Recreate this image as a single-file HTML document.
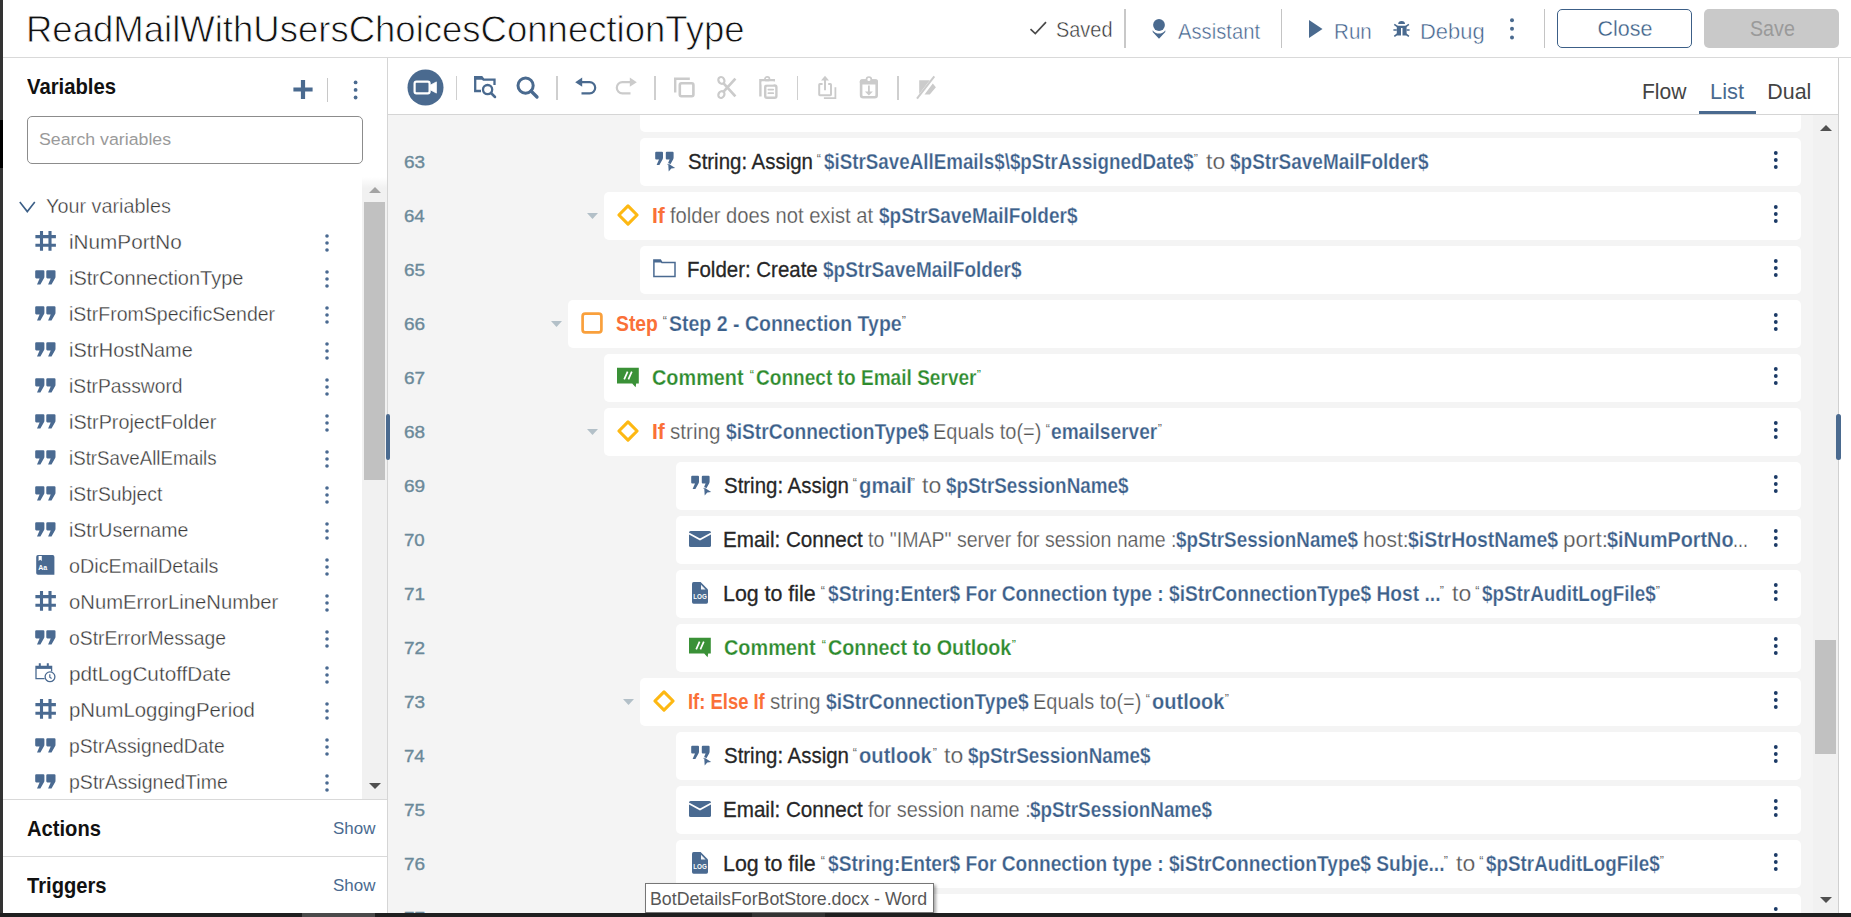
<!DOCTYPE html>
<html lang="en"><head><meta charset="utf-8"><title>ReadMailWithUsersChoicesConnectionType</title>
<style>
*{box-sizing:border-box;margin:0;padding:0}
html,body{width:1851px;height:917px;overflow:hidden;background:#fff}
body{position:relative;font-family:"Liberation Sans",sans-serif;color:#222}
.abs{position:absolute}
.t{position:absolute;white-space:nowrap;line-height:1;transform-origin:0 0}
svg{position:absolute;overflow:visible}
/* frame edges */
#edgeL{left:0;top:0;width:3px;height:917px;background:#333}
#edgeL2{left:0;top:120px;width:3px;height:48px;background:#000}
#edgeB{left:0;top:913px;width:1851px;height:4px;background:#1f1f1f}
#edgeB2{left:302px;top:913px;width:73px;height:4px;background:#4a4a4a}
/* header */
#hdr{left:3px;top:0;width:1848px;height:58px;background:#fff;border-bottom:1px solid #d9d9d9}
.title{font-size:36.3px;color:#111;-webkit-text-stroke:0.8px #fff}
.h20{font-size:21.4px;color:#333;-webkit-text-stroke:0.45px #fff}
.h21{font-size:21.4px;color:#3f618b;-webkit-text-stroke:0.45px #fff}
.vdiv{position:absolute;background:#c4c4c4;width:1px}
#btnClose{left:1557px;top:9px;width:135px;height:39px;border:1px solid #3c5f87;border-radius:5px;background:#fff}
#btnSave{left:1704px;top:9px;width:135px;height:39px;border-radius:5px;background:#c9c9c9}
.btnc{font-size:21.5px;color:#3c5f87;-webkit-text-stroke:0.3px #fff}
.btns{font-size:21.5px;color:#9a9a9a}
/* sidebar */
#side{left:3px;top:58px;width:385px;height:855px;background:#fff;border-right:1px solid #d5d5d5}
.sh{font-size:21.5px;font-weight:bold;color:#111}
#search{left:27px;top:116px;width:336px;height:48px;border:1px solid #8c8c8c;border-radius:5px;background:#fff}
.ph{font-size:17.4px;color:#9a9a9a}
.yv{font-size:19.8px;color:#333;-webkit-text-stroke:0.4px #fff}
.vn{font-size:19.8px;color:#3a3a3a;-webkit-text-stroke:0.32px #fff}
.show{font-size:17.3px;color:#4a6a8f}
.hline{position:absolute;height:1px;background:#d9d9d9}
#sbTrack{left:362px;top:177px;width:25px;height:622px;background:linear-gradient(to bottom,#fff 0,#f1f1f1 11px)}
#sbThumb{left:364px;top:202px;width:21px;height:278px;background:#c1c1c1}
/* toolbar */
#tbar{left:388px;top:58px;width:1451px;height:57px;background:#fff;border-bottom:1px solid #d5d5d5}
.tab{font-size:21.4px;color:#444}
.tabsel{font-size:21.4px;color:#4a6a8f}
#tabline{left:1699px;top:111px;width:57px;height:3px;background:#4a6a8f}
/* list */
#list{left:388px;top:115px;width:1451px;height:798px;background:#f4f4f4;overflow:hidden}
#ltrack{left:1813px;top:115px;width:25px;height:798px;background:#f1f1f1}
#lborder{left:1838px;top:58px;width:1px;height:855px;background:#d0d0d0}
#lthumb{left:1815px;top:640px;width:21px;height:114px;background:#c1c1c1}
.card{position:absolute;height:48px;background:#fff;border-radius:5px}
.ln{font-size:17px;color:#6b8999;-webkit-text-stroke:0.35px #6b8999}
.r{font-size:21.3px}
.k{color:#262626;-webkit-text-stroke:0.28px #262626}
.b{color:#3c608a;font-weight:bold;-webkit-text-stroke:0.25px #fff}
.g{color:#555;-webkit-text-stroke:0.25px #fff}
.o{color:#fa7038;font-weight:bold}
.gr{color:#2e8b2e;font-weight:bold;-webkit-text-stroke:0.25px #fff}
.q{color:#666}
.qg{color:#2e8b2e}
/* tooltip */
#tip{left:645px;top:883px;width:289px;height:30px;background:#fff;border:1px solid #767676;box-shadow:2px 2px 3px rgba(0,0,0,.35)}
.tipt{font-size:18.1px;color:#575757}

</style></head>
<body>
<div id="hdr" class="abs"></div><span id="s0" class="t title" style="left:25.98px;transform:scaleX(1.0061);top:12px;">ReadMailWithUsersChoicesConnectionType</span><svg style="left:1029px;top:20px" width="19" height="16" viewBox="0 0 19 16"><path d="M1.5 9.2 L6.3 13.6 L17 2.2" fill="none" stroke="#4a4a4a" stroke-width="1.7"/></svg><span id="s1" class="t h20" style="left:1056.07px;transform:scaleX(0.9309);top:20px;">Saved</span><div class="vdiv" style="left:1124px;top:9px;height:39px;width:2px;background:#c8c8c8"></div><svg style="left:1152px;top:19px" width="14" height="20" viewBox="0 0 14 20"><circle cx="7" cy="6" r="5.9" fill="#4a6a8f"/><path d="M0.7 11.2 A7.6 7.6 0 0 0 13.3 11.2 L13.3 13 L7 19.7 L0.7 13 Z" fill="#4a6a8f"/></svg><span id="s2" class="t h21" style="left:1177.50px;transform:scaleX(0.9462);top:22px;">Assistant</span><div class="vdiv" style="left:1281px;top:9px;height:39px"></div><svg style="left:1309px;top:20px" width="14" height="18" viewBox="0 0 14 18"><path d="M0 0 L13.5 9 L0 18 Z" fill="#4a6a8f"/></svg><span id="s3" class="t h21" style="left:1333.89px;transform:scaleX(0.9633);top:22px;">Run</span><svg style="left:1393px;top:21px" width="17" height="16" viewBox="0 0 17 16"><g fill="#4a6a8f"><path d="M5.2 3 A3.4 2.9 0 0 1 12 3 Z"/><path d="M3.8 4.7 H13.6 V13.6 Q13.6 14.6 12.6 14.6 H9.5 V7 H8 V14.6 H4.8 Q3.8 14.6 3.8 13.6 Z"/></g><path d="M1.3 3.3 L4.5 5.6 M15.9 3.3 L12.7 5.6 M0.4 9 H3.8 M13.6 9 H16.6 M1.3 15.4 L4.5 13 M15.9 15.4 L12.7 13" fill="none" stroke="#4a6a8f" stroke-width="1.6"/></svg><span id="s4" class="t h21" style="left:1419.79px;transform:scaleX(1.0250);top:22px;">Debug</span><svg style="left:1509px;top:17px" width="6" height="24" viewBox="0 0 6 24"><g fill="#4a6a8f"><circle cx="3" cy="3.2" r="2"/><circle cx="3" cy="11.8" r="2"/><circle cx="3" cy="20.4" r="2"/></g></svg><div class="vdiv" style="left:1544px;top:9px;height:39px"></div><div id="btnClose" class="abs"></div><span id="s5" class="t btnc" style="left:1597.50px;transform:scaleX(1.0000);top:19px;">Close</span><div id="btnSave" class="abs"></div><span id="s6" class="t btns" style="left:1749.59px;transform:scaleX(0.9149);top:19px;">Save</span><div id="side" class="abs"></div><span id="s7" class="t sh" style="left:27.19px;transform:scaleX(0.9429);top:77px;">Variables</span><svg style="left:293px;top:80px" width="20" height="19" viewBox="0 0 20 19"><path d="M10 0 V19 M0.4 9.5 H19.6" stroke="#4a6a8f" stroke-width="4.2" fill="none"/></svg><div class="vdiv" style="left:327px;top:78px;height:24px;background:#c8c8c8"></div><svg style="left:353px;top:80px" width="6" height="20" viewBox="0 0 6 20"><g fill="#4a6a8f"><circle cx="2.6" cy="2.4" r="1.9"/><circle cx="2.6" cy="9.9" r="1.9"/><circle cx="2.6" cy="17.5" r="1.9"/></g></svg><div id="search" class="abs"></div><span id="s8" class="t ph" style="left:39.48px;transform:scaleX(1.0195);top:131px;">Search variables</span><div id="sbTrack" class="abs"></div><div id="sbThumb" class="abs"></div><svg style="left:369px;top:187px" width="12" height="6" viewBox="0 0 12 6"><path d="M0 6 L6 0 L12 6 Z" fill="#a3a3a3"/></svg><svg style="left:369px;top:783px" width="12" height="6" viewBox="0 0 12 6"><path d="M0 0 L6 6 L12 0 Z" fill="#505050"/></svg><svg style="left:19px;top:201px" width="17" height="12" viewBox="0 0 17 12"><path d="M0.8 1 L8.3 10.6 L15.8 1" fill="none" stroke="#3c5f87" stroke-width="1.6"/></svg><span id="s9" class="t yv" style="left:45.93px;transform:scaleX(1.0014);top:197px;">Your variables</span><svg style="left:34.5px;top:231.2px" width="21" height="20" viewBox="0 0 21 20"><path d="M6.5 0.1 V19.7 M15 0.1 V19.7 M0.4 5.6 H20.9 M0.4 14.2 H20.9" stroke="#4a6a91" stroke-width="3.1" fill="none"/></svg><span id="s10" class="t vn" style="left:69.00px;transform:scaleX(1.0467);top:233px;">iNumPortNo</span><svg style="left:324px;top:233.8px" width="6" height="18" viewBox="0 0 6 18"><g fill="#4a6a91"><circle cx="3" cy="2" r="1.8"/><circle cx="3" cy="9" r="1.8"/><circle cx="3" cy="16" r="1.8"/></g></svg><svg style="left:35px;top:270.2px" width="21" height="15" viewBox="0 0 21 15"><g fill="#4a6a91"><path d="M1.3 0.2 H8.3 Q9.4 0.2 9.4 1.3 V6.4 Q9.4 7.6 8.8 8.6 L5.4 14.4 H2 L4.6 8.4 H1.3 Q0.2 8.4 0.2 7.3 V1.3 Q0.2 0.2 1.3 0.2 Z"/><path d="M12.4 0.2 H19.4 Q20.5 0.2 20.5 1.3 V6.4 Q20.5 7.6 19.9 8.6 L16.5 14.4 H13.1 L15.7 8.4 H12.4 Q11.3 8.4 11.3 7.3 V1.3 Q11.3 0.2 12.4 0.2 Z"/></g></svg><span id="s11" class="t vn" style="left:69.05px;transform:scaleX(1.0104);top:269px;">iStrConnectionType</span><svg style="left:324px;top:269.8px" width="6" height="18" viewBox="0 0 6 18"><g fill="#4a6a91"><circle cx="3" cy="2" r="1.8"/><circle cx="3" cy="9" r="1.8"/><circle cx="3" cy="16" r="1.8"/></g></svg><svg style="left:35px;top:306.2px" width="21" height="15" viewBox="0 0 21 15"><g fill="#4a6a91"><path d="M1.3 0.2 H8.3 Q9.4 0.2 9.4 1.3 V6.4 Q9.4 7.6 8.8 8.6 L5.4 14.4 H2 L4.6 8.4 H1.3 Q0.2 8.4 0.2 7.3 V1.3 Q0.2 0.2 1.3 0.2 Z"/><path d="M12.4 0.2 H19.4 Q20.5 0.2 20.5 1.3 V6.4 Q20.5 7.6 19.9 8.6 L16.5 14.4 H13.1 L15.7 8.4 H12.4 Q11.3 8.4 11.3 7.3 V1.3 Q11.3 0.2 12.4 0.2 Z"/></g></svg><span id="s12" class="t vn" style="left:69.08px;transform:scaleX(0.9868);top:305px;">iStrFromSpecificSender</span><svg style="left:324px;top:305.8px" width="6" height="18" viewBox="0 0 6 18"><g fill="#4a6a91"><circle cx="3" cy="2" r="1.8"/><circle cx="3" cy="9" r="1.8"/><circle cx="3" cy="16" r="1.8"/></g></svg><svg style="left:35px;top:342.2px" width="21" height="15" viewBox="0 0 21 15"><g fill="#4a6a91"><path d="M1.3 0.2 H8.3 Q9.4 0.2 9.4 1.3 V6.4 Q9.4 7.6 8.8 8.6 L5.4 14.4 H2 L4.6 8.4 H1.3 Q0.2 8.4 0.2 7.3 V1.3 Q0.2 0.2 1.3 0.2 Z"/><path d="M12.4 0.2 H19.4 Q20.5 0.2 20.5 1.3 V6.4 Q20.5 7.6 19.9 8.6 L16.5 14.4 H13.1 L15.7 8.4 H12.4 Q11.3 8.4 11.3 7.3 V1.3 Q11.3 0.2 12.4 0.2 Z"/></g></svg><span id="s13" class="t vn" style="left:69.06px;transform:scaleX(1.0050);top:341px;">iStrHostName</span><svg style="left:324px;top:341.8px" width="6" height="18" viewBox="0 0 6 18"><g fill="#4a6a91"><circle cx="3" cy="2" r="1.8"/><circle cx="3" cy="9" r="1.8"/><circle cx="3" cy="16" r="1.8"/></g></svg><svg style="left:35px;top:378.2px" width="21" height="15" viewBox="0 0 21 15"><g fill="#4a6a91"><path d="M1.3 0.2 H8.3 Q9.4 0.2 9.4 1.3 V6.4 Q9.4 7.6 8.8 8.6 L5.4 14.4 H2 L4.6 8.4 H1.3 Q0.2 8.4 0.2 7.3 V1.3 Q0.2 0.2 1.3 0.2 Z"/><path d="M12.4 0.2 H19.4 Q20.5 0.2 20.5 1.3 V6.4 Q20.5 7.6 19.9 8.6 L16.5 14.4 H13.1 L15.7 8.4 H12.4 Q11.3 8.4 11.3 7.3 V1.3 Q11.3 0.2 12.4 0.2 Z"/></g></svg><span id="s14" class="t vn" style="left:69.10px;transform:scaleX(0.9746);top:377px;">iStrPassword</span><svg style="left:324px;top:377.8px" width="6" height="18" viewBox="0 0 6 18"><g fill="#4a6a91"><circle cx="3" cy="2" r="1.8"/><circle cx="3" cy="9" r="1.8"/><circle cx="3" cy="16" r="1.8"/></g></svg><svg style="left:35px;top:414.2px" width="21" height="15" viewBox="0 0 21 15"><g fill="#4a6a91"><path d="M1.3 0.2 H8.3 Q9.4 0.2 9.4 1.3 V6.4 Q9.4 7.6 8.8 8.6 L5.4 14.4 H2 L4.6 8.4 H1.3 Q0.2 8.4 0.2 7.3 V1.3 Q0.2 0.2 1.3 0.2 Z"/><path d="M12.4 0.2 H19.4 Q20.5 0.2 20.5 1.3 V6.4 Q20.5 7.6 19.9 8.6 L16.5 14.4 H13.1 L15.7 8.4 H12.4 Q11.3 8.4 11.3 7.3 V1.3 Q11.3 0.2 12.4 0.2 Z"/></g></svg><span id="s15" class="t vn" style="left:69.07px;transform:scaleX(0.9995);top:413px;">iStrProjectFolder</span><svg style="left:324px;top:413.8px" width="6" height="18" viewBox="0 0 6 18"><g fill="#4a6a91"><circle cx="3" cy="2" r="1.8"/><circle cx="3" cy="9" r="1.8"/><circle cx="3" cy="16" r="1.8"/></g></svg><svg style="left:35px;top:450.2px" width="21" height="15" viewBox="0 0 21 15"><g fill="#4a6a91"><path d="M1.3 0.2 H8.3 Q9.4 0.2 9.4 1.3 V6.4 Q9.4 7.6 8.8 8.6 L5.4 14.4 H2 L4.6 8.4 H1.3 Q0.2 8.4 0.2 7.3 V1.3 Q0.2 0.2 1.3 0.2 Z"/><path d="M12.4 0.2 H19.4 Q20.5 0.2 20.5 1.3 V6.4 Q20.5 7.6 19.9 8.6 L16.5 14.4 H13.1 L15.7 8.4 H12.4 Q11.3 8.4 11.3 7.3 V1.3 Q11.3 0.2 12.4 0.2 Z"/></g></svg><span id="s16" class="t vn" style="left:69.14px;transform:scaleX(0.9455);top:449px;">iStrSaveAllEmails</span><svg style="left:324px;top:449.8px" width="6" height="18" viewBox="0 0 6 18"><g fill="#4a6a91"><circle cx="3" cy="2" r="1.8"/><circle cx="3" cy="9" r="1.8"/><circle cx="3" cy="16" r="1.8"/></g></svg><svg style="left:35px;top:486.2px" width="21" height="15" viewBox="0 0 21 15"><g fill="#4a6a91"><path d="M1.3 0.2 H8.3 Q9.4 0.2 9.4 1.3 V6.4 Q9.4 7.6 8.8 8.6 L5.4 14.4 H2 L4.6 8.4 H1.3 Q0.2 8.4 0.2 7.3 V1.3 Q0.2 0.2 1.3 0.2 Z"/><path d="M12.4 0.2 H19.4 Q20.5 0.2 20.5 1.3 V6.4 Q20.5 7.6 19.9 8.6 L16.5 14.4 H13.1 L15.7 8.4 H12.4 Q11.3 8.4 11.3 7.3 V1.3 Q11.3 0.2 12.4 0.2 Z"/></g></svg><span id="s17" class="t vn" style="left:69.10px;transform:scaleX(0.9763);top:485px;">iStrSubject</span><svg style="left:324px;top:485.8px" width="6" height="18" viewBox="0 0 6 18"><g fill="#4a6a91"><circle cx="3" cy="2" r="1.8"/><circle cx="3" cy="9" r="1.8"/><circle cx="3" cy="16" r="1.8"/></g></svg><svg style="left:35px;top:522.2px" width="21" height="15" viewBox="0 0 21 15"><g fill="#4a6a91"><path d="M1.3 0.2 H8.3 Q9.4 0.2 9.4 1.3 V6.4 Q9.4 7.6 8.8 8.6 L5.4 14.4 H2 L4.6 8.4 H1.3 Q0.2 8.4 0.2 7.3 V1.3 Q0.2 0.2 1.3 0.2 Z"/><path d="M12.4 0.2 H19.4 Q20.5 0.2 20.5 1.3 V6.4 Q20.5 7.6 19.9 8.6 L16.5 14.4 H13.1 L15.7 8.4 H12.4 Q11.3 8.4 11.3 7.3 V1.3 Q11.3 0.2 12.4 0.2 Z"/></g></svg><span id="s18" class="t vn" style="left:69.08px;transform:scaleX(0.9868);top:521px;">iStrUsername</span><svg style="left:324px;top:521.8px" width="6" height="18" viewBox="0 0 6 18"><g fill="#4a6a91"><circle cx="3" cy="2" r="1.8"/><circle cx="3" cy="9" r="1.8"/><circle cx="3" cy="16" r="1.8"/></g></svg><svg style="left:36px;top:555.0px" width="19" height="20" viewBox="0 0 19 20"><path d="M2 0.1 H16.6 Q18.4 0.1 18.4 1.9 V19.8 H2 Q0.2 19.8 0.2 18 V1.9 Q0.2 0.1 2 0.1 Z" fill="#4a6a91"/><path d="M2.6 1 V6 L4.2 4.8 L5.8 6 V1 Z" fill="#fff"/><text x="2.2" y="15" font-family="Liberation Sans, sans-serif" font-size="7" font-weight="bold" fill="#fff">Aa</text></svg><span id="s19" class="t vn" style="left:69.40px;transform:scaleX(0.9995);top:557px;">oDicEmailDetails</span><svg style="left:324px;top:557.8px" width="6" height="18" viewBox="0 0 6 18"><g fill="#4a6a91"><circle cx="3" cy="2" r="1.8"/><circle cx="3" cy="9" r="1.8"/><circle cx="3" cy="16" r="1.8"/></g></svg><svg style="left:34.5px;top:591.2px" width="21" height="20" viewBox="0 0 21 20"><path d="M6.5 0.1 V19.7 M15 0.1 V19.7 M0.4 5.6 H20.9 M0.4 14.2 H20.9" stroke="#4a6a91" stroke-width="3.1" fill="none"/></svg><span id="s20" class="t vn" style="left:69.38px;transform:scaleX(1.0234);top:593px;">oNumErrorLineNumber</span><svg style="left:324px;top:593.8px" width="6" height="18" viewBox="0 0 6 18"><g fill="#4a6a91"><circle cx="3" cy="2" r="1.8"/><circle cx="3" cy="9" r="1.8"/><circle cx="3" cy="16" r="1.8"/></g></svg><svg style="left:35px;top:630.2px" width="21" height="15" viewBox="0 0 21 15"><g fill="#4a6a91"><path d="M1.3 0.2 H8.3 Q9.4 0.2 9.4 1.3 V6.4 Q9.4 7.6 8.8 8.6 L5.4 14.4 H2 L4.6 8.4 H1.3 Q0.2 8.4 0.2 7.3 V1.3 Q0.2 0.2 1.3 0.2 Z"/><path d="M12.4 0.2 H19.4 Q20.5 0.2 20.5 1.3 V6.4 Q20.5 7.6 19.9 8.6 L16.5 14.4 H13.1 L15.7 8.4 H12.4 Q11.3 8.4 11.3 7.3 V1.3 Q11.3 0.2 12.4 0.2 Z"/></g></svg><span id="s21" class="t vn" style="left:69.42px;transform:scaleX(0.9775);top:629px;">oStrErrorMessage</span><svg style="left:324px;top:629.8px" width="6" height="18" viewBox="0 0 6 18"><g fill="#4a6a91"><circle cx="3" cy="2" r="1.8"/><circle cx="3" cy="9" r="1.8"/><circle cx="3" cy="16" r="1.8"/></g></svg><svg style="left:35px;top:663.2px" width="21" height="20" viewBox="0 0 21 20"><g fill="none" stroke="#4a6a91"><path d="M9.6 15.6 H1 V3.4 H16.6 V8.6" stroke-width="1.3"/><path d="M1 4.6 H16.6" stroke-width="2.6"/><path d="M4.8 0.2 V4 M12.8 0.2 V4" stroke-width="2"/><circle cx="15" cy="13.8" r="4.9" stroke-width="1.3" fill="#fff"/><path d="M14.8 11.2 V14.2 L16.6 15.4" stroke-width="1.2"/></g></svg><span id="s22" class="t vn" style="left:69.00px;transform:scaleX(1.0477);top:665px;">pdtLogCutoffDate</span><svg style="left:324px;top:665.8px" width="6" height="18" viewBox="0 0 6 18"><g fill="#4a6a91"><circle cx="3" cy="2" r="1.8"/><circle cx="3" cy="9" r="1.8"/><circle cx="3" cy="16" r="1.8"/></g></svg><svg style="left:34.5px;top:699.2px" width="21" height="20" viewBox="0 0 21 20"><path d="M6.5 0.1 V19.7 M15 0.1 V19.7 M0.4 5.6 H20.9 M0.4 14.2 H20.9" stroke="#4a6a91" stroke-width="3.1" fill="none"/></svg><span id="s23" class="t vn" style="left:69.03px;transform:scaleX(1.0306);top:701px;">pNumLoggingPeriod</span><svg style="left:324px;top:701.8px" width="6" height="18" viewBox="0 0 6 18"><g fill="#4a6a91"><circle cx="3" cy="2" r="1.8"/><circle cx="3" cy="9" r="1.8"/><circle cx="3" cy="16" r="1.8"/></g></svg><svg style="left:35px;top:738.2px" width="21" height="15" viewBox="0 0 21 15"><g fill="#4a6a91"><path d="M1.3 0.2 H8.3 Q9.4 0.2 9.4 1.3 V6.4 Q9.4 7.6 8.8 8.6 L5.4 14.4 H2 L4.6 8.4 H1.3 Q0.2 8.4 0.2 7.3 V1.3 Q0.2 0.2 1.3 0.2 Z"/><path d="M12.4 0.2 H19.4 Q20.5 0.2 20.5 1.3 V6.4 Q20.5 7.6 19.9 8.6 L16.5 14.4 H13.1 L15.7 8.4 H12.4 Q11.3 8.4 11.3 7.3 V1.3 Q11.3 0.2 12.4 0.2 Z"/></g></svg><span id="s24" class="t vn" style="left:69.10px;transform:scaleX(0.9763);top:737px;">pStrAssignedDate</span><svg style="left:324px;top:737.8px" width="6" height="18" viewBox="0 0 6 18"><g fill="#4a6a91"><circle cx="3" cy="2" r="1.8"/><circle cx="3" cy="9" r="1.8"/><circle cx="3" cy="16" r="1.8"/></g></svg><svg style="left:35px;top:774.2px" width="21" height="15" viewBox="0 0 21 15"><g fill="#4a6a91"><path d="M1.3 0.2 H8.3 Q9.4 0.2 9.4 1.3 V6.4 Q9.4 7.6 8.8 8.6 L5.4 14.4 H2 L4.6 8.4 H1.3 Q0.2 8.4 0.2 7.3 V1.3 Q0.2 0.2 1.3 0.2 Z"/><path d="M12.4 0.2 H19.4 Q20.5 0.2 20.5 1.3 V6.4 Q20.5 7.6 19.9 8.6 L16.5 14.4 H13.1 L15.7 8.4 H12.4 Q11.3 8.4 11.3 7.3 V1.3 Q11.3 0.2 12.4 0.2 Z"/></g></svg><span id="s25" class="t vn" style="left:69.08px;transform:scaleX(0.9870);top:773px;">pStrAssignedTime</span><svg style="left:324px;top:773.8px" width="6" height="18" viewBox="0 0 6 18"><g fill="#4a6a91"><circle cx="3" cy="2" r="1.8"/><circle cx="3" cy="9" r="1.8"/><circle cx="3" cy="16" r="1.8"/></g></svg><div class="abs" style="left:3px;top:799px;width:384px;height:114px;background:#fff"></div><div class="hline" style="left:3px;top:799px;width:384px"></div><span id="s26" class="t sh" style="left:26.88px;transform:scaleX(0.9375);top:819px;">Actions</span><span id="s27" class="t show" style="left:332.52px;transform:scaleX(0.9803);top:820px;">Show</span><div class="hline" style="left:3px;top:856px;width:384px"></div><span id="s28" class="t sh" style="left:27.19px;transform:scaleX(0.9382);top:876px;">Triggers</span><span id="s29" class="t show" style="left:332.52px;transform:scaleX(0.9803);top:877px;">Show</span><div id="tbar" class="abs"></div><svg style="left:407px;top:69px" width="37" height="37" viewBox="0 0 37 37"><circle cx="18.5" cy="18.5" r="18" fill="#4a6a8f"/><rect x="7.6" y="12.6" width="15" height="11.8" rx="1.8" fill="#4a6a8f" stroke="#fff" stroke-width="2.2"/><path d="M23.2 16.2 L29.4 12.9 V24.1 L23.2 20.8 Z" fill="#fff" stroke="#fff" stroke-width="0.8" stroke-linejoin="round"/></svg><div class="vdiv" style="left:456px;top:76px;height:24px;width:1px;background:#cfcfcf"></div><svg style="left:474px;top:76px" width="23" height="23" viewBox="0 0 23 23"><g fill="none" stroke="#4a6a8f" stroke-width="2.3"><path d="M7 15 H1.2 V1.2 H7.5 L9.5 3.6 H20.5 V9" /><path d="M0.1 0.1 H7.9 L10.6 3.8 H0.1 Z" fill="#4a6a8f" stroke="none"/><circle cx="13.6" cy="13.6" r="4.6"/><path d="M17 17 L21 21" stroke-width="2.5" stroke-linecap="round"/></g></svg><svg style="left:516px;top:76px" width="23" height="23" viewBox="0 0 23 23"><g fill="none" stroke="#4a6a8f"><circle cx="9.6" cy="9.6" r="7.6" stroke-width="3"/><path d="M15 15 L21 21" stroke-width="3.3" stroke-linecap="round"/></g></svg><div class="vdiv" style="left:556px;top:76px;height:24px;width:2px;background:#cfcfcf"></div><svg style="left:575px;top:77px" width="22" height="18" viewBox="0 0 22 18"><path d="M7 5.2 H14.6 A5.6 5.6 0 0 1 14.6 16.4 H6.5" fill="none" stroke="#4a6a8f" stroke-width="2.2"/><path d="M0.2 5.2 L7.2 0.6 V9.8 Z" fill="#4a6a8f"/></svg><svg style="left:615px;top:77px" width="22" height="18" viewBox="0 0 22 18"><path d="M15 5.2 H7.4 A5.6 5.6 0 0 0 7.4 16.4 H15.5" fill="none" stroke="#cbcbcb" stroke-width="2.2"/><path d="M21.8 5.2 L14.8 0.6 V9.8 Z" fill="#cbcbcb"/></svg><div class="vdiv" style="left:654px;top:76px;height:24px;width:2px;background:#cfcfcf"></div><svg style="left:674px;top:77px" width="21" height="21" viewBox="0 0 21 21"><g fill="none" stroke="#cbcbcb"><path d="M1.2 15.6 V1.7 H15.8" stroke-width="2.4"/><rect x="5.8" y="6.3" width="13.6" height="12.9" rx="1.6" stroke-width="2.6"/></g></svg><svg style="left:717px;top:76px" width="20" height="24" viewBox="0 0 20 24"><g fill="none" stroke="#cbcbcb"><ellipse cx="4.4" cy="4.4" rx="2.9" ry="3.5" transform="rotate(-30 4.4 4.4)" stroke-width="2.2"/><ellipse cx="4.4" cy="18.6" rx="2.9" ry="3.5" transform="rotate(30 4.4 18.6)" stroke-width="2.2"/><path d="M6.6 7.4 L18.4 20.4 M6.6 15.6 L18.4 2.6" stroke-width="2.7"/></g></svg><svg style="left:759px;top:76px" width="19" height="23" viewBox="0 0 19 23"><g fill="none" stroke="#cbcbcb"><circle cx="8.2" cy="3.2" r="2.3" stroke-width="1.7"/><path d="M1.4 20.6 V4.3 H16" stroke-width="2.4"/><rect x="6.2" y="9.5" width="11.2" height="12.2" rx="1.8" stroke-width="2.4"/><path d="M9.4 13.6 H14.2 M9.4 17.2 H14.2" stroke-width="1.8" stroke-linecap="round"/></g><rect x="2.6" y="5.5" width="12" height="3" fill="#fff"/></svg><div class="vdiv" style="left:797px;top:76px;height:24px;width:1px;background:#cfcfcf"></div><svg style="left:818px;top:75px" width="19" height="24" viewBox="0 0 19 24"><g fill="none" stroke="#cbcbcb"><path d="M4.6 9 H1.9 Q1.2 9 1.2 9.7 V19.5 Q1.2 20.2 1.9 20.2 H12.3 Q13 20.2 13 19.5 V9.7 Q13 9 12.3 9 H10.2" stroke-width="2"/><path d="M7 15.3 V4.5" stroke-width="2"/><path d="M5.9 23.1 H17.4 V12.3" stroke-width="1.8"/></g><path d="M3 5.6 L7 0.8 L11 5.6 Z" fill="#cbcbcb"/></svg><svg style="left:859px;top:76px" width="20" height="23" viewBox="0 0 20 23"><rect x="2.1" y="4.6" width="15.6" height="16.7" rx="2" fill="none" stroke="#cbcbcb" stroke-width="2.6"/><rect x="0.8" y="3.3" width="18.2" height="5.2" rx="2" fill="#cbcbcb"/><circle cx="9.9" cy="3.4" r="2.4" fill="#fff" stroke="#cbcbcb" stroke-width="1.7"/><path d="M9.9 9.6 V16" stroke="#cbcbcb" stroke-width="1.8"/><path d="M5.9 15.4 H13.9 L9.9 19.6 Z" fill="#cbcbcb"/></svg><div class="vdiv" style="left:897px;top:76px;height:24px;width:2px;background:#cfcfcf"></div><svg style="left:916px;top:76px" width="21" height="24" viewBox="0 0 21 24"><path d="M3.2 4.2 H13.8 L3.2 18 Z M16.8 7.5 L19.9 11.3 L13.8 18.5 H8.5 Z" fill="#cbcbcb"/><path d="M18.3 0.3 L1 22.6" stroke="#cbcbcb" stroke-width="2"/></svg><span id="s30" class="t tab" style="left:1642.36px;transform:scaleX(0.9847);top:82px;">Flow</span><span id="s31" class="t tabsel" style="left:1710.30px;transform:scaleX(1.0213);top:82px;">List</span><span id="s32" class="t tab" style="left:1767.33px;transform:scaleX(1.0000);top:82px;">Dual</span><div id="tabline" class="abs"></div><div id="list" class="abs"></div><div id="ltrack" class="abs"></div><div id="lborder" class="abs"></div><div id="lthumb" class="abs"></div><svg style="left:1820px;top:125px" width="12" height="6" viewBox="0 0 12 6"><path d="M0 6 L6 0 L12 6 Z" fill="#505050"/></svg><svg style="left:1820px;top:897px" width="12" height="6" viewBox="0 0 12 6"><path d="M0 0 L6 6 L12 0 Z" fill="#505050"/></svg><div class="abs" style="left:386px;top:414px;width:4px;height:46px;border-radius:2px;background:#4a6a8f"></div><div class="abs" style="left:1836px;top:414px;width:5px;height:46px;border-radius:2.5px;background:#4a6a8f"></div><div class="abs" id="rows" style="left:0;top:115px;width:1839px;height:798px;overflow:hidden"><div class="abs" style="left:0;top:-115px;width:1839px;height:917px"><div class="card" style="left:640px;top:84px;width:1161px"></div><span id="s33" class="t ln" style="left:403.68px;transform:scaleX(1.1176);top:100px;">62</span><svg style="left:1772.7px;top:97px" width="6" height="18" viewBox="0 0 6 18"><g fill="#1b3a66"><circle cx="2.8" cy="2" r="1.9"/><circle cx="2.8" cy="9" r="1.9"/><circle cx="2.8" cy="16" r="1.9"/></g></svg><div class="card" style="left:640px;top:138px;width:1161px"></div><span id="s34" class="t ln" style="left:403.68px;transform:scaleX(1.1176);top:154px;">63</span><svg style="left:654.6px;top:151px" width="21" height="21" viewBox="0 0 21 21"><g fill="#4a6a91"><path d="M1.2 0.7 H7 Q8 0.7 8 1.7 V6.6 Q8 7.6 7.5 8.5 L4.4 14.1 H1.6 L4 8.4 H1.2 Q0.2 8.4 0.2 7.4 V1.7 Q0.2 0.7 1.2 0.7 Z"/><path d="M1.2 0.7 H7 Q8 0.7 8 1.7 V6.6 Q8 7.6 7.5 8.5 L4.4 14.1 H1.6 L4 8.4 H1.2 Q0.2 8.4 0.2 7.4 V1.7 Q0.2 0.7 1.2 0.7 Z" transform="translate(10.6 0)"/><path d="M13.2 12.6 L20.2 17.1 L16.3 17.6 L13.7 20.6 Z" stroke="#fff" stroke-width="1.2" paint-order="stroke"/></g></svg><span id="s35" class="t r k" style="left:687.54px;transform:scaleX(0.9595);top:152px;">String: Assign</span><span id="s36" class="t r q" style="left:816.67px;transform:scaleX(1.0000);top:153.3px;font-size:12.5px;">“</span><span id="s37" class="t r b" style="left:823.71px;transform:scaleX(0.8821);top:152px;">$iStrSaveAllEmails$\$pStrAssignedDate$</span><span id="s38" class="t r q" style="left:1193.83px;transform:scaleX(1.0000);top:153.3px;font-size:12.5px;">”</span><span id="s39" class="t r g" style="left:1205.64px;transform:scaleX(1.0800);top:152px;">to</span><span id="s40" class="t r b" style="left:1229.70px;transform:scaleX(0.8919);top:152px;">$pStrSaveMailFolder$</span><svg style="left:1772.7px;top:151px" width="6" height="18" viewBox="0 0 6 18"><g fill="#1b3a66"><circle cx="2.8" cy="2" r="1.9"/><circle cx="2.8" cy="9" r="1.9"/><circle cx="2.8" cy="16" r="1.9"/></g></svg><div class="card" style="left:604px;top:192px;width:1197px"></div><span id="s41" class="t ln" style="left:403.70px;transform:scaleX(1.0962);top:208px;">64</span><svg style="left:587px;top:213px" width="11" height="6" viewBox="0 0 11 6"><path d="M0 0 H11 L5.5 6 Z" fill="#b3c0c8"/></svg><svg style="left:617px;top:204px" width="22" height="22" viewBox="0 0 22 22"><path d="M11 1.9 L20.1 11 L11 20.1 L1.9 11 Z" fill="none" stroke="#fdb813" stroke-width="3.1" stroke-linejoin="round"/></svg><span id="s42" class="t r o" style="left:652.19px;transform:scaleX(0.9857);top:206px;">If</span><span id="s43" class="t r g" style="left:670.18px;transform:scaleX(0.9477);top:206px;">folder does not exist at</span><span id="s44" class="t r b" style="left:878.70px;transform:scaleX(0.8919);top:206px;">$pStrSaveMailFolder$</span><svg style="left:1772.7px;top:205px" width="6" height="18" viewBox="0 0 6 18"><g fill="#1b3a66"><circle cx="2.8" cy="2" r="1.9"/><circle cx="2.8" cy="9" r="1.9"/><circle cx="2.8" cy="16" r="1.9"/></g></svg><div class="card" style="left:640px;top:246px;width:1161px"></div><span id="s45" class="t ln" style="left:403.68px;transform:scaleX(1.1176);top:262px;">65</span><svg style="left:653px;top:259px" width="23" height="19" viewBox="0 0 23 19"><path d="M0.9 17.6 V1 H7.4 L9 3.6 H22 V17.6 Z" fill="none" stroke="#4a6a91" stroke-width="1.5"/><path d="M0.9 1 H7.4 L9 3.6 H0.9 Z" fill="#4a6a91"/></svg><span id="s46" class="t r k" style="left:687.40px;transform:scaleX(0.9600);top:260px;">Folder: Create</span><span id="s47" class="t r b" style="left:822.70px;transform:scaleX(0.8919);top:260px;">$pStrSaveMailFolder$</span><svg style="left:1772.7px;top:259px" width="6" height="18" viewBox="0 0 6 18"><g fill="#1b3a66"><circle cx="2.8" cy="2" r="1.9"/><circle cx="2.8" cy="9" r="1.9"/><circle cx="2.8" cy="16" r="1.9"/></g></svg><div class="card" style="left:568px;top:300px;width:1233px"></div><span id="s48" class="t ln" style="left:403.68px;transform:scaleX(1.1176);top:316px;">66</span><svg style="left:551px;top:321px" width="11" height="6" viewBox="0 0 11 6"><path d="M0 0 H11 L5.5 6 Z" fill="#b3c0c8"/></svg><svg style="left:581px;top:312px" width="22" height="22" viewBox="0 0 22 22"><rect x="1.6" y="1.6" width="18.8" height="18.8" rx="2.6" fill="none" stroke="#f9a03c" stroke-width="2.7"/></svg><span id="s49" class="t r o" style="left:615.90px;transform:scaleX(0.9067);top:314px;">Step</span><span id="s50" class="t r q" style="left:662.67px;transform:scaleX(1.0000);top:315.3px;font-size:12.5px;">“</span><span id="s51" class="t r b" style="left:668.89px;transform:scaleX(0.9162);top:314px;">Step 2 - Connection Type</span><span id="s52" class="t r q" style="left:901.83px;transform:scaleX(1.0000);top:315.3px;font-size:12.5px;">”</span><svg style="left:1772.7px;top:313px" width="6" height="18" viewBox="0 0 6 18"><g fill="#1b3a66"><circle cx="2.8" cy="2" r="1.9"/><circle cx="2.8" cy="9" r="1.9"/><circle cx="2.8" cy="16" r="1.9"/></g></svg><div class="card" style="left:604px;top:354px;width:1197px"></div><span id="s53" class="t ln" style="left:403.68px;transform:scaleX(1.1176);top:370px;">67</span><svg style="left:617px;top:367px" width="22" height="21" viewBox="0 0 22 21"><path d="M0 0.8 H21.8 V16.4 H19.2 L18.6 20.3 L15.2 16.4 H0 Z" fill="#3a9137"/><path d="M7.2 12.4 L10.6 4.6 M11.4 12.4 L14.8 4.6" stroke="#fff" stroke-width="1.7"/></svg><span id="s54" class="t r gr" style="left:651.57px;transform:scaleX(0.9330);top:368px;">Comment</span><span id="s55" class="t r qg" style="left:749.67px;transform:scaleX(1.0000);top:369.3px;font-size:12.5px;">“</span><span id="s56" class="t r gr" style="left:755.60px;transform:scaleX(0.8959);top:368px;">Connect to Email Server</span><span id="s57" class="t r qg" style="left:976.83px;transform:scaleX(1.0000);top:369.3px;font-size:12.5px;">”</span><svg style="left:1772.7px;top:367px" width="6" height="18" viewBox="0 0 6 18"><g fill="#1b3a66"><circle cx="2.8" cy="2" r="1.9"/><circle cx="2.8" cy="9" r="1.9"/><circle cx="2.8" cy="16" r="1.9"/></g></svg><div class="card" style="left:604px;top:408px;width:1197px"></div><span id="s58" class="t ln" style="left:403.68px;transform:scaleX(1.1176);top:424px;">68</span><svg style="left:587px;top:429px" width="11" height="6" viewBox="0 0 11 6"><path d="M0 0 H11 L5.5 6 Z" fill="#b3c0c8"/></svg><svg style="left:617px;top:420px" width="22" height="22" viewBox="0 0 22 22"><path d="M11 1.9 L20.1 11 L11 20.1 L1.9 11 Z" fill="none" stroke="#fdb813" stroke-width="3.1" stroke-linejoin="round"/></svg><span id="s59" class="t r o" style="left:652.19px;transform:scaleX(0.9857);top:422px;">If</span><span id="s60" class="t r g" style="left:669.85px;transform:scaleX(0.9700);top:422px;">string</span><span id="s61" class="t r b" style="left:725.70px;transform:scaleX(0.9031);top:422px;">$iStrConnectionType$</span><span id="s62" class="t r g" style="left:932.93px;transform:scaleX(0.9392);top:422px;">Equals to(=)</span><span id="s63" class="t r q" style="left:1045.67px;transform:scaleX(1.0000);top:423.3px;font-size:12.5px;">“</span><span id="s64" class="t r b" style="left:1051.10px;transform:scaleX(0.8974);top:422px;">emailserver</span><span id="s65" class="t r q" style="left:1157.83px;transform:scaleX(1.0000);top:423.3px;font-size:12.5px;">”</span><svg style="left:1772.7px;top:421px" width="6" height="18" viewBox="0 0 6 18"><g fill="#1b3a66"><circle cx="2.8" cy="2" r="1.9"/><circle cx="2.8" cy="9" r="1.9"/><circle cx="2.8" cy="16" r="1.9"/></g></svg><div class="card" style="left:676px;top:462px;width:1125px"></div><span id="s66" class="t ln" style="left:403.68px;transform:scaleX(1.1176);top:478px;">69</span><svg style="left:690.6px;top:475px" width="21" height="21" viewBox="0 0 21 21"><g fill="#4a6a91"><path d="M1.2 0.7 H7 Q8 0.7 8 1.7 V6.6 Q8 7.6 7.5 8.5 L4.4 14.1 H1.6 L4 8.4 H1.2 Q0.2 8.4 0.2 7.4 V1.7 Q0.2 0.7 1.2 0.7 Z"/><path d="M1.2 0.7 H7 Q8 0.7 8 1.7 V6.6 Q8 7.6 7.5 8.5 L4.4 14.1 H1.6 L4 8.4 H1.2 Q0.2 8.4 0.2 7.4 V1.7 Q0.2 0.7 1.2 0.7 Z" transform="translate(10.6 0)"/><path d="M13.2 12.6 L20.2 17.1 L16.3 17.6 L13.7 20.6 Z" stroke="#fff" stroke-width="1.2" paint-order="stroke"/></g></svg><span id="s67" class="t r k" style="left:723.54px;transform:scaleX(0.9595);top:476px;">String: Assign</span><span id="s68" class="t r q" style="left:852.67px;transform:scaleX(1.0000);top:477.3px;font-size:12.5px;">“</span><span id="s69" class="t r b" style="left:858.55px;transform:scaleX(0.9528);top:476px;">gmail</span><span id="s70" class="t r q" style="left:910.83px;transform:scaleX(1.0000);top:477.3px;font-size:12.5px;">”</span><span id="s71" class="t r g" style="left:921.64px;transform:scaleX(1.0800);top:476px;">to</span><span id="s72" class="t r b" style="left:945.70px;transform:scaleX(0.8864);top:476px;">$pStrSessionName$</span><svg style="left:1772.7px;top:475px" width="6" height="18" viewBox="0 0 6 18"><g fill="#1b3a66"><circle cx="2.8" cy="2" r="1.9"/><circle cx="2.8" cy="9" r="1.9"/><circle cx="2.8" cy="16" r="1.9"/></g></svg><div class="card" style="left:676px;top:516px;width:1125px"></div><span id="s73" class="t ln" style="left:403.70px;transform:scaleX(1.0962);top:532px;">70</span><svg style="left:689px;top:531px" width="22" height="16" viewBox="0 0 22 16"><rect x="0" y="0" width="22" height="16" rx="1.6" fill="#4a6a91"/><path d="M0 2.4 L11 8.6 L22 2.4" fill="none" stroke="#fff" stroke-width="1.7"/></svg><span id="s74" class="t r k" style="left:723.39px;transform:scaleX(0.9673);top:530px;">Email: Connect</span><span id="s75" class="t r g" style="left:868.19px;transform:scaleX(0.9186);top:530px;">to "IMAP" server for session name :</span><span id="s76" class="t r b" style="left:1176.21px;transform:scaleX(0.8839);top:530px;">$pStrSessionName$</span><span id="s77" class="t r g" style="left:1363.18px;transform:scaleX(0.9884);top:530px;">host:</span><span id="s78" class="t r b" style="left:1408.20px;transform:scaleX(0.9116);top:530px;">$iStrHostName$</span><span id="s79" class="t r g" style="left:1563.09px;transform:scaleX(1.0551);top:530px;">port:</span><span id="s80" class="t r b" style="left:1607.19px;transform:scaleX(0.9296);top:530px;">$iNumPortNo</span><span id="s81" class="t r g" style="left:1733.32px;transform:scaleX(0.8415);top:530px;">...</span><svg style="left:1772.7px;top:529px" width="6" height="18" viewBox="0 0 6 18"><g fill="#1b3a66"><circle cx="2.8" cy="2" r="1.9"/><circle cx="2.8" cy="9" r="1.9"/><circle cx="2.8" cy="16" r="1.9"/></g></svg><div class="card" style="left:676px;top:570px;width:1125px"></div><span id="s82" class="t ln" style="left:403.68px;transform:scaleX(1.1176);top:586px;">71</span><svg style="left:692px;top:582px" width="16" height="22" viewBox="0 0 16 22"><path d="M1.6 0.1 H8.6 L16 7.5 V20 Q16 21.7 14.4 21.7 H1.6 Q0 21.7 0 20 V1.7 Q0 0.1 1.6 0.1 Z" fill="#4a6a91"/><path d="M9 2.8 V7.4 H13.6 Z" fill="#fff" opacity="0.92"/><text x="1.2" y="16.8" font-family="Liberation Sans, sans-serif" font-size="6.4" font-weight="bold" fill="#fff" textLength="13.6" lengthAdjust="spacingAndGlyphs">LOG</text></svg><span id="s83" class="t r k" style="left:723.33px;transform:scaleX(1.0037);top:584px;">Log to file</span><span id="s84" class="t r q" style="left:820.67px;transform:scaleX(1.0000);top:585.3px;font-size:12.5px;">“</span><span id="s85" class="t r b" style="left:827.70px;transform:scaleX(0.9007);top:584px;">$String:Enter$ For Connection type : $iStrConnectionType$ Host ...</span><span id="s86" class="t r q" style="left:1439.83px;transform:scaleX(1.0000);top:585.3px;font-size:12.5px;">”</span><span id="s87" class="t r g" style="left:1451.64px;transform:scaleX(1.0800);top:584px;">to</span><span id="s88" class="t r q" style="left:1475.17px;transform:scaleX(1.0000);top:585.3px;font-size:12.5px;">“</span><span id="s89" class="t r b" style="left:1481.71px;transform:scaleX(0.8842);top:584px;">$pStrAuditLogFile$</span><span id="s90" class="t r q" style="left:1655.83px;transform:scaleX(1.0000);top:585.3px;font-size:12.5px;">”</span><svg style="left:1772.7px;top:583px" width="6" height="18" viewBox="0 0 6 18"><g fill="#1b3a66"><circle cx="2.8" cy="2" r="1.9"/><circle cx="2.8" cy="9" r="1.9"/><circle cx="2.8" cy="16" r="1.9"/></g></svg><div class="card" style="left:676px;top:624px;width:1125px"></div><span id="s91" class="t ln" style="left:403.68px;transform:scaleX(1.1176);top:640px;">72</span><svg style="left:689px;top:637px" width="22" height="21" viewBox="0 0 22 21"><path d="M0 0.8 H21.8 V16.4 H19.2 L18.6 20.3 L15.2 16.4 H0 Z" fill="#3a9137"/><path d="M7.2 12.4 L10.6 4.6 M11.4 12.4 L14.8 4.6" stroke="#fff" stroke-width="1.7"/></svg><span id="s92" class="t r gr" style="left:723.57px;transform:scaleX(0.9330);top:638px;">Comment</span><span id="s93" class="t r qg" style="left:821.67px;transform:scaleX(1.0000);top:639.3px;font-size:12.5px;">“</span><span id="s94" class="t r gr" style="left:827.57px;transform:scaleX(0.9280);top:638px;">Connect to Outlook</span><span id="s95" class="t r qg" style="left:1011.83px;transform:scaleX(1.0000);top:639.3px;font-size:12.5px;">”</span><svg style="left:1772.7px;top:637px" width="6" height="18" viewBox="0 0 6 18"><g fill="#1b3a66"><circle cx="2.8" cy="2" r="1.9"/><circle cx="2.8" cy="9" r="1.9"/><circle cx="2.8" cy="16" r="1.9"/></g></svg><div class="card" style="left:640px;top:678px;width:1161px"></div><span id="s96" class="t ln" style="left:403.68px;transform:scaleX(1.1176);top:694px;">73</span><svg style="left:623px;top:699px" width="11" height="6" viewBox="0 0 11 6"><path d="M0 0 H11 L5.5 6 Z" fill="#b3c0c8"/></svg><svg style="left:653px;top:690px" width="22" height="22" viewBox="0 0 22 22"><path d="M11 1.9 L20.1 11 L11 20.1 L1.9 11 Z" fill="none" stroke="#fdb813" stroke-width="3.1" stroke-linejoin="round"/></svg><span id="s97" class="t r o" style="left:688.35px;transform:scaleX(0.8645);top:692px;">If: Else If</span><span id="s98" class="t r g" style="left:769.85px;transform:scaleX(0.9700);top:692px;">string</span><span id="s99" class="t r b" style="left:825.70px;transform:scaleX(0.9031);top:692px;">$iStrConnectionType$</span><span id="s100" class="t r g" style="left:1032.93px;transform:scaleX(0.9392);top:692px;">Equals to(=)</span><span id="s101" class="t r q" style="left:1145.67px;transform:scaleX(1.0000);top:693.3px;font-size:12.5px;">“</span><span id="s102" class="t r b" style="left:1151.56px;transform:scaleX(0.9408);top:692px;">outlook</span><span id="s103" class="t r q" style="left:1224.83px;transform:scaleX(1.0000);top:693.3px;font-size:12.5px;">”</span><svg style="left:1772.7px;top:691px" width="6" height="18" viewBox="0 0 6 18"><g fill="#1b3a66"><circle cx="2.8" cy="2" r="1.9"/><circle cx="2.8" cy="9" r="1.9"/><circle cx="2.8" cy="16" r="1.9"/></g></svg><div class="card" style="left:676px;top:732px;width:1125px"></div><span id="s104" class="t ln" style="left:403.70px;transform:scaleX(1.0962);top:748px;">74</span><svg style="left:690.6px;top:745px" width="21" height="21" viewBox="0 0 21 21"><g fill="#4a6a91"><path d="M1.2 0.7 H7 Q8 0.7 8 1.7 V6.6 Q8 7.6 7.5 8.5 L4.4 14.1 H1.6 L4 8.4 H1.2 Q0.2 8.4 0.2 7.4 V1.7 Q0.2 0.7 1.2 0.7 Z"/><path d="M1.2 0.7 H7 Q8 0.7 8 1.7 V6.6 Q8 7.6 7.5 8.5 L4.4 14.1 H1.6 L4 8.4 H1.2 Q0.2 8.4 0.2 7.4 V1.7 Q0.2 0.7 1.2 0.7 Z" transform="translate(10.6 0)"/><path d="M13.2 12.6 L20.2 17.1 L16.3 17.6 L13.7 20.6 Z" stroke="#fff" stroke-width="1.2" paint-order="stroke"/></g></svg><span id="s105" class="t r k" style="left:723.54px;transform:scaleX(0.9595);top:746px;">String: Assign</span><span id="s106" class="t r q" style="left:852.67px;transform:scaleX(1.0000);top:747.3px;font-size:12.5px;">“</span><span id="s107" class="t r b" style="left:859.05px;transform:scaleX(0.9474);top:746px;">outlook</span><span id="s108" class="t r q" style="left:932.83px;transform:scaleX(1.0000);top:747.3px;font-size:12.5px;">”</span><span id="s109" class="t r g" style="left:943.64px;transform:scaleX(1.0800);top:746px;">to</span><span id="s110" class="t r b" style="left:967.70px;transform:scaleX(0.8864);top:746px;">$pStrSessionName$</span><svg style="left:1772.7px;top:745px" width="6" height="18" viewBox="0 0 6 18"><g fill="#1b3a66"><circle cx="2.8" cy="2" r="1.9"/><circle cx="2.8" cy="9" r="1.9"/><circle cx="2.8" cy="16" r="1.9"/></g></svg><div class="card" style="left:676px;top:786px;width:1125px"></div><span id="s111" class="t ln" style="left:403.68px;transform:scaleX(1.1176);top:802px;">75</span><svg style="left:689px;top:801px" width="22" height="16" viewBox="0 0 22 16"><rect x="0" y="0" width="22" height="16" rx="1.6" fill="#4a6a91"/><path d="M0 2.4 L11 8.6 L22 2.4" fill="none" stroke="#fff" stroke-width="1.7"/></svg><span id="s112" class="t r k" style="left:723.39px;transform:scaleX(0.9673);top:800px;">Email: Connect</span><span id="s113" class="t r g" style="left:868.19px;transform:scaleX(0.9350);top:800px;">for session name :</span><span id="s114" class="t r b" style="left:1030.21px;transform:scaleX(0.8839);top:800px;">$pStrSessionName$</span><svg style="left:1772.7px;top:799px" width="6" height="18" viewBox="0 0 6 18"><g fill="#1b3a66"><circle cx="2.8" cy="2" r="1.9"/><circle cx="2.8" cy="9" r="1.9"/><circle cx="2.8" cy="16" r="1.9"/></g></svg><div class="card" style="left:676px;top:840px;width:1125px"></div><span id="s115" class="t ln" style="left:403.68px;transform:scaleX(1.1176);top:856px;">76</span><svg style="left:692px;top:852px" width="16" height="22" viewBox="0 0 16 22"><path d="M1.6 0.1 H8.6 L16 7.5 V20 Q16 21.7 14.4 21.7 H1.6 Q0 21.7 0 20 V1.7 Q0 0.1 1.6 0.1 Z" fill="#4a6a91"/><path d="M9 2.8 V7.4 H13.6 Z" fill="#fff" opacity="0.92"/><text x="1.2" y="16.8" font-family="Liberation Sans, sans-serif" font-size="6.4" font-weight="bold" fill="#fff" textLength="13.6" lengthAdjust="spacingAndGlyphs">LOG</text></svg><span id="s116" class="t r k" style="left:723.33px;transform:scaleX(1.0037);top:854px;">Log to file</span><span id="s117" class="t r q" style="left:820.67px;transform:scaleX(1.0000);top:855.3px;font-size:12.5px;">“</span><span id="s118" class="t r b" style="left:827.70px;transform:scaleX(0.9004);top:854px;">$String:Enter$ For Connection type : $iStrConnectionType$ Subje...</span><span id="s119" class="t r q" style="left:1443.83px;transform:scaleX(1.0000);top:855.3px;font-size:12.5px;">”</span><span id="s120" class="t r g" style="left:1455.64px;transform:scaleX(1.0800);top:854px;">to</span><span id="s121" class="t r q" style="left:1479.17px;transform:scaleX(1.0000);top:855.3px;font-size:12.5px;">“</span><span id="s122" class="t r b" style="left:1485.71px;transform:scaleX(0.8842);top:854px;">$pStrAuditLogFile$</span><span id="s123" class="t r q" style="left:1659.83px;transform:scaleX(1.0000);top:855.3px;font-size:12.5px;">”</span><svg style="left:1772.7px;top:853px" width="6" height="18" viewBox="0 0 6 18"><g fill="#1b3a66"><circle cx="2.8" cy="2" r="1.9"/><circle cx="2.8" cy="9" r="1.9"/><circle cx="2.8" cy="16" r="1.9"/></g></svg><div class="card" style="left:676px;top:894px;width:1125px"></div><span id="s124" class="t ln" style="left:403.68px;transform:scaleX(1.1176);top:910px;">77</span><svg style="left:1772.7px;top:907px" width="6" height="18" viewBox="0 0 6 18"><g fill="#1b3a66"><circle cx="2.8" cy="2" r="1.9"/><circle cx="2.8" cy="9" r="1.9"/><circle cx="2.8" cy="16" r="1.9"/></g></svg></div></div><div id="tip" class="abs"></div><span id="s125" class="t tipt" style="left:650.19px;transform:scaleX(0.9815);top:890px;">BotDetailsForBotStore.docx - Word</span><div id="edgeL" class="abs"></div><div id="edgeL2" class="abs"></div><div id="edgeB" class="abs"></div><div id="edgeB2" class="abs"></div><div class="abs" style="left:752px;top:913px;width:73px;height:4px;background:#333"></div>
</body></html>
